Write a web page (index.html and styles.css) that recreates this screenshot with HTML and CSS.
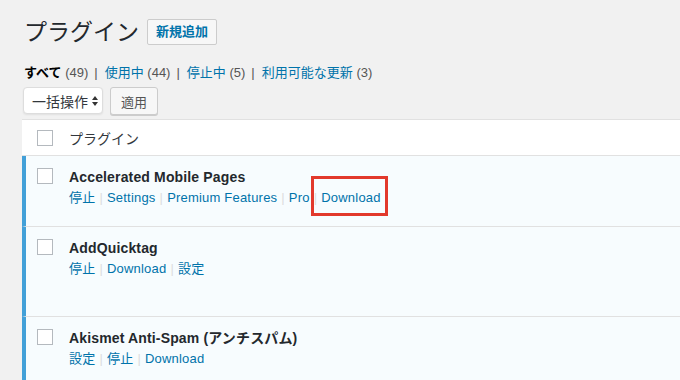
FILE: index.html
```html
<!DOCTYPE html>
<html lang="ja">
<head>
    <meta charset="UTF-8">
    <title>プラグイン</title>
    <link rel="stylesheet" href="styles.css">
</head>
<body>
    <div class="wrap">
        <div class="page-header">
            <h1>プラグイン</h1>
            <a class="page-title-action" href="#">新規追加</a>
        </div>

        <ul class="subsubsub">
            <li><a class="current" href="#">すべて <span class="count">(49)</span></a><span class="sep">|</span></li>
            <li><a href="#">使用中 <span class="count">(44)</span></a><span class="sep">|</span></li>
            <li><a href="#">停止中 <span class="count">(5)</span></a><span class="sep">|</span></li>
            <li><a href="#">利用可能な更新 <span class="count">(3)</span></a></li>
        </ul>

        <div class="tablenav">
            <div class="bulk-select">一括操作<span class="arrows"></span></div>
            <button class="button">適用</button>
        </div>

        <div class="plugins">
            <div class="row head">
                <div class="check"><span class="checkbox"></span></div>
                <div class="col-name">プラグイン</div>
            </div>

            <div class="row active" style="height: 71px">
                <div class="check"><span class="checkbox"></span></div>
                <div class="col-name">
                    <strong class="plugin-title">Accelerated Mobile Pages</strong>
                    <div class="row-actions">
                        <a href="#">停止</a><span class="sep">|</span><a href="#">Settings</a><span class="sep">|</span><a href="#">Premium Features</a><span class="sep">|</span><a href="#">Pro</a><span class="sep">|</span><a class="marked" href="#">Download</a>
                    </div>
                </div>
            </div>

            <div class="row active" style="height: 90px">
                <div class="check"><span class="checkbox"></span></div>
                <div class="col-name">
                    <strong class="plugin-title">AddQuicktag</strong>
                    <div class="row-actions">
                        <a href="#">停止</a><span class="sep">|</span><a href="#">Download</a><span class="sep">|</span><a href="#">設定</a>
                    </div>
                </div>
            </div>

            <div class="row active" style="height: 70px">
                <div class="check"><span class="checkbox"></span></div>
                <div class="col-name">
                    <strong class="plugin-title">Akismet Anti-Spam (アンチスパム)</strong>
                    <div class="row-actions">
                        <a href="#">設定</a><span class="sep">|</span><a href="#">停止</a><span class="sep">|</span><a href="#">Download</a>
                    </div>
                </div>
            </div>
        </div>
    </div>
</body>
</html>
```

FILE: styles.css
```css
body {
    margin: 0;
    background-color: #f1f1f1;
    color: #444;
    font-family: "Liberation Sans", "Noto Sans CJK JP", sans-serif;
    font-size: 13px;
    overflow: hidden;
}
a {
    color: #0073aa;
    text-decoration: none;
}
.wrap {
    padding: 17px 0 0 22px;
}
.page-header {
    display: flex;
    align-items: center;
    padding-left: 2px;
}
.page-header h1 {
    margin: 0;
    font-size: 23px;
    font-weight: 400;
    line-height: 30px;
    color: #23282d;
}
.page-title-action {
    margin-left: 8px;
    padding: 4px 8px;
    line-height: 16px;
    border: 1px solid #ccc;
    border-radius: 2px;
    background-color: #f7f7f7;
    font-weight: bold;
}
.subsubsub {
    list-style: none;
    margin: 17px 0 0 2px;
    padding: 0;
    display: flex;
    line-height: 18px;
    color: #555;
}
.subsubsub li {
    white-space: pre;
}
.subsubsub .sep {
    color: #555;
    margin: 0 7px 0 6px;
}
.subsubsub a.current {
    color: #000;
    font-weight: bold;
}
.subsubsub .count {
    color: #555;
    font-weight: normal;
}
.tablenav {
    display: flex;
    gap: 7px;
    margin-top: 5px;
    padding-left: 1px;
}
.bulk-select {
    display: flex;
    align-items: center;
    height: 27px;
    padding: 0 0 0 8px;
    width: 80px;
    box-sizing: border-box;
    border: 1px solid #ddd;
    border-radius: 4px;
    background-color: #fff;
    color: #32373c;
    font-size: 14px;
    white-space: nowrap;
    box-shadow: 0 1px 2px rgba(0,0,0,0.07);
}
.arrows {
    margin-left: 4px;
    display: flex;
    flex-direction: column;
    gap: 2px;
}
.arrows::before,
.arrows::after {
    content: "";
    border-left: 3.5px solid transparent;
    border-right: 3.5px solid transparent;
}
.arrows::before {
    border-bottom: 4px solid #333;
}
.arrows::after {
    border-top: 4px solid #333;
}
.button {
    height: 28px;
    width: 48px;
    padding: 0;
    border: 1px solid #ccc;
    border-radius: 3px;
    background-color: #f7f7f7;
    box-shadow: 0 1px 0 #ccc;
    color: #555;
    font-family: inherit;
    font-size: 13px;
}
.plugins {
    margin-top: 4px;
    background-color: #fff;
    border-top: 1px solid #e1e1e1;
}
.row {
    display: flex;
    border-bottom: 1px solid #e1e1e1;
    box-sizing: border-box;
}
.row.head {
    height: 36px;
    align-items: center;
    font-size: 14px;
    color: #32373c;
}
.row.active {
    background-color: #f7fcfe;
    border-left: 4px solid #42a0d8;
}
.check {
    width: 47px;
    padding-left: 15px;
    box-sizing: border-box;
}
.row.active .check {
    width: 43px;
    padding-left: 11px;
    padding-top: 12px;
}
.checkbox {
    display: block;
    width: 14px;
    height: 14px;
    border: 1px solid #b4b9be;
    background-color: #fff;
}
.row.active .col-name {
    padding-top: 12px;
}
.plugin-title {
    display: block;
    font-size: 14px;
    color: #23282d;
    line-height: 19px;
    letter-spacing: 0.15px;
}
.row-actions {
    margin-top: 1px;
    line-height: 20px;
    letter-spacing: 0.2px;
}
.row-actions .sep {
    color: #ddd;
    margin: 0 4px;
}
.marked {
    position: relative;
}
.marked::after {
    content: "";
    position: absolute;
    left: -10px;
    right: -7px;
    top: -14px;
    bottom: -11px;
    border: 3px solid #e2392c;
}
```
